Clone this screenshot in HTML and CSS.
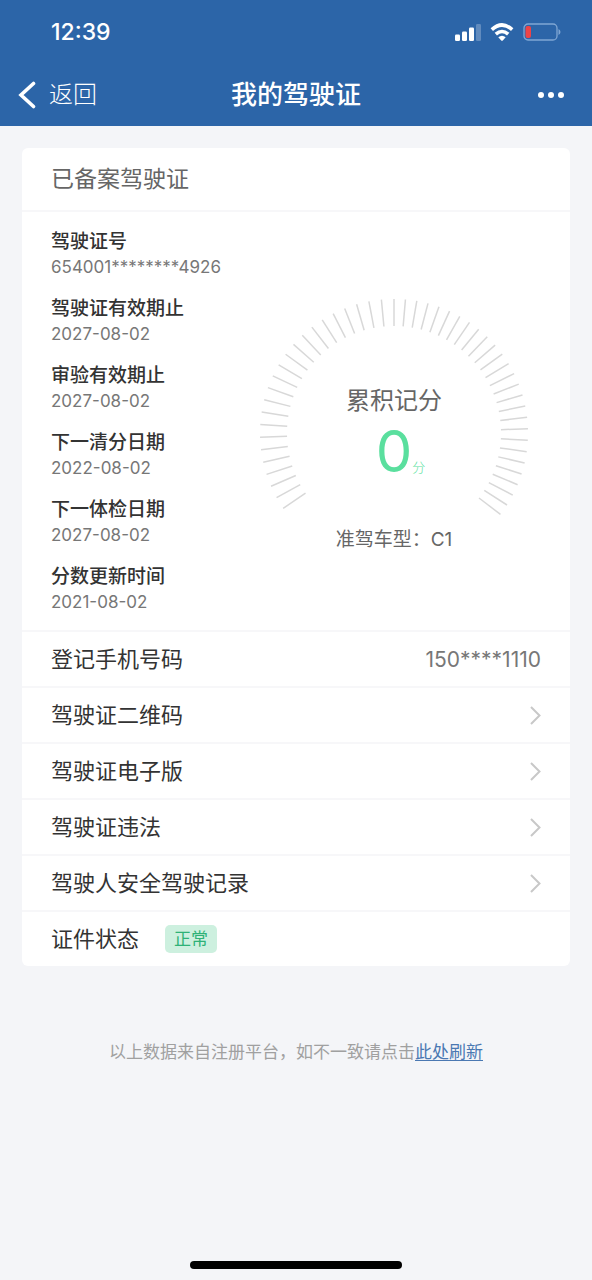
FILE: index.html
```
<!DOCTYPE html>
<html lang="zh-CN">
<head>
<meta charset="utf-8">
<meta name="viewport" content="width=device-width, initial-scale=1">
<title>我的驾驶证</title>
<link rel="stylesheet" href="styles.css">
</head>
<body>
<div class="page">
  <header class="top">
    <div class="status">
      <time class="clock">12:39</time>
      <div class="status-icons">
        <svg class="signal" viewBox="0 0 27 18" aria-hidden="true">
          <rect x="1" y="11.500" width="5" height="6.500" rx="1.200"/>
          <rect x="8" y="8.500" width="5" height="9.500" rx="1.200"/>
          <rect x="15" y="4.500" width="5" height="13.500" rx="1.200"/>
          <rect x="22" y="1" width="5" height="17" rx="1.200" opacity=".25"/>
        </svg>
        <svg class="wifi" viewBox="0 0 24 18" aria-hidden="true">
          <path d="M1.800 6.600Q12-2.600 22.200 6.600M5.800 11.200Q12 5.800 18.200 11.200" fill="none" stroke="#fff" stroke-width="3.600"/>
          <path d="M8.300 14.300Q12 11.300 15.700 14.300L12.800 17.400Q12 18 11.200 17.400Z"/>
        </svg>
        <svg class="battery" viewBox="0 0 38 18" aria-hidden="true">
          <rect x="1" y="1" width="33" height="16" rx="4" fill="none" stroke="#7fa6d3" stroke-width="1.300"/>
          <rect x="2.500" y="3" width="5.500" height="12" rx="2" fill="#ee4346"/>
          <path d="M35.500 6v6q2-1 2-3t-2-3" fill="#7fa6d3"/>
        </svg>
      </div>
    </div>
    <nav class="nav">
      <button class="back" type="button">
        <svg class="back-icon" viewBox="0 0 18 28" aria-hidden="true"><path d="M15.500 2.500 3 14l12.500 11.500" fill="none" stroke="#fff" stroke-width="3.600" stroke-linecap="round" stroke-linejoin="miter"/></svg>
        <span>返回</span>
      </button>
      <h1 class="title">我的驾驶证</h1>
      <button class="more" type="button" aria-label="更多">
        <svg class="more-icon" viewBox="0 0 26 6" aria-hidden="true"><circle cx="3" cy="3" r="3"/><circle cx="13" cy="3" r="3"/><circle cx="23" cy="3" r="3"/></svg>
      </button>
    </nav>
  </header>

  <main class="main">
    <section class="card">
      <h2 class="card-title">已备案驾驶证</h2>
      <div class="summary">
        <dl class="facts">
          <div><dt>驾驶证号</dt><dd>654001********4926</dd></div>
          <div><dt>驾驶证有效期止</dt><dd>2027-08-02</dd></div>
          <div><dt>审验有效期止</dt><dd>2027-08-02</dd></div>
          <div><dt>下一清分日期</dt><dd>2022-08-02</dd></div>
          <div><dt>下一体检日期</dt><dd>2027-08-02</dd></div>
          <div><dt>分数更新时间</dt><dd>2021-08-02</dd></div>
        </dl>
        <div class="score">
          <div class="gauge">
            <svg class="dial" viewBox="0 0 268 216" aria-hidden="true"><g id="ticks"></g></svg>
            <div class="reading">
              <span class="reading-label">累积记分</span>
              <span class="points">0<span class="unit">分</span></span>
            </div>
          </div>
          <p class="vehicle">准驾车型：C1</p>
        </div>
      </div>
      <div class="row row-phone"><span>登记手机号码</span><span class="phone">150****1110</span></div>
      <a class="row" href="#qr"><span>驾驶证二维码</span><svg class="chevron" viewBox="0 0 11 19" aria-hidden="true"><path d="m1 1 8.500 8.500L1 18"/></svg></a>
      <a class="row" href="#card"><span>驾驶证电子版</span><svg class="chevron" viewBox="0 0 11 19" aria-hidden="true"><path d="m1 1 8.500 8.500L1 18"/></svg></a>
      <a class="row" href="#violations"><span>驾驶证违法</span><svg class="chevron" viewBox="0 0 11 19" aria-hidden="true"><path d="m1 1 8.500 8.500L1 18"/></svg></a>
      <a class="row" href="#record"><span>驾驶人安全驾驶记录</span><svg class="chevron" viewBox="0 0 11 19" aria-hidden="true"><path d="m1 1 8.500 8.500L1 18"/></svg></a>
      <div class="row row-state"><span>证件状态</span><span class="badge">正常</span></div>
    </section>
    <p class="note">以上数据来自注册平台，如不一致请点击<a href="#refresh">此处刷新</a></p>
  </main>
  <div class="home-bar"></div>
</div>
<script src="gauge.js"></script>
</body>
</html>
```
FILE: styles.css
```
* { box-sizing: border-box; }

body {
  margin: 0;
  background: #f4f5f8;
  color: #333;
  font-family: Inter, "Noto Sans CJK SC", sans-serif;
}

h1, h2, p, dl, dd { margin: 0; }

svg { display: block; }

button {
  padding: 0;
  border: 0;
  background: none;
  color: inherit;
  font: inherit;
  cursor: pointer;
}

.page {
  display: flex;
  flex-direction: column;
  min-height: 100vh;
}

/* Header */
.top {
  background: #2c65a8;
  color: #fff;
}

.status {
  display: flex;
  align-items: center;
  justify-content: space-between;
  height: 64px;
  padding: 0 31px 0 51px;
}

.clock {
  font-size: 23px;
  font-weight: 500;
}

.status-icons {
  display: flex;
  align-items: center;
  gap: 9px;
}

.signal { width: 27px; height: 18px; fill: #fff; }
.wifi { width: 24px; height: 18px; fill: #fff; }
.battery { width: 38px; height: 18px; }

.nav {
  display: grid;
  grid-template-columns: 1fr auto 1fr;
  align-items: center;
  height: 62px;
  padding: 0 18px;
}

.back {
  display: flex;
  align-items: center;
  gap: 13px;
  justify-self: start;
  font-size: 24px;
  font-weight: 300;
  line-height: 32px;
}

.back-icon { width: 18px; height: 28px; }

.title {
  font-size: 26px;
  font-weight: 500;
  line-height: 32px;
}

.more {
  justify-self: end;
  padding: 10px;
}

.more-icon { width: 26px; height: 6px; fill: #fff; }

/* Card */
.main { padding: 22px; }

.card {
  border-radius: 6px;
  background: #fff;
}

.card-title {
  padding: 0 29px;
  border-bottom: 2px solid #f7f7f9;
  color: #666;
  font-size: 23px;
  font-weight: 400;
  line-height: 62px;
}

.summary {
  display: flex;
  align-items: center;
  justify-content: space-between;
  padding: 17px 42px 16px 29px;
}

.facts {
  display: grid;
  gap: 17px;
}

.facts dt {
  font-size: 19px;
  font-weight: 500;
  line-height: 26px;
}

.facts dd {
  color: #777;
  font-size: 17px;
  line-height: 24px;
}

.score {
  width: 268px;
  padding-top: 8px;
  color: #666;
}

.gauge { display: grid; }

.dial, .reading { grid-area: 1 / 1; }

.dial {
  width: 100%;
  stroke: #d8d8d8;
  stroke-width: 1.5px;
}

.reading {
  display: flex;
  flex-direction: column;
  align-items: center;
  padding-top: 86px;
}

.reading-label {
  font-size: 24px;
  line-height: 32px;
}

.points {
  position: relative;
  color: #5adf9e;
  font-size: 58px;
  font-weight: 400;
  line-height: 68px;
}

.unit {
  position: absolute;
  bottom: 8px;
  left: 100%;
  font-size: 13px;
  font-weight: 300;
  line-height: 20px;
}

.vehicle {
  margin-top: 12px;
  font-size: 19px;
  line-height: 26px;
  text-align: center;
}

/* Rows */
.row {
  display: flex;
  align-items: center;
  justify-content: space-between;
  height: 56px;
  padding: 0 29px;
  border-top: 2px solid #f7f7f9;
  color: #333;
  font-size: 22px;
  line-height: 54px;
  text-decoration: none;
}

.row-phone { align-items: baseline; }

.phone {
  color: #777;
  font-size: 21px;
}

.chevron {
  width: 11px;
  height: 19px;
  fill: none;
  stroke: #c8c8c8;
  stroke-width: 2px;
}

.row-state {
  justify-content: start;
  gap: 26px;
}

.badge {
  padding: 0 9px;
  border-radius: 5px;
  background: #cdf0df;
  color: #2eb277;
  font-size: 17px;
  line-height: 28px;
}

.note {
  margin-top: 73px;
  color: #a0a0a0;
  font-size: 17px;
  line-height: 26px;
  text-align: center;
}

.note a {
  color: #4a78b2;
  text-underline-offset: 2px;
}

.home-bar {
  width: 212px;
  height: 8px;
  margin: auto auto 11px;
  border-radius: 4px;
  background: #000;
}
```
FILE: gauge.js
```
const SVG_NS = 'http://www.w3.org/2000/svg';
const ticks = document.getElementById('ticks');

function addTick(angle) {
  const line = document.createElementNS(SVG_NS, 'line');
  line.setAttribute('x1', 134);
  line.setAttribute('x2', 134);
  line.setAttribute('y1', 0);
  line.setAttribute('y2', 27);
  line.setAttribute('transform', `rotate(${angle} 134 134)`);
  ticks.appendChild(line);
}

for (let i = -23; i <= 26; i++) {
  addTick(i < 0 ? i * 5.4 : i * 4.9);
}
```
